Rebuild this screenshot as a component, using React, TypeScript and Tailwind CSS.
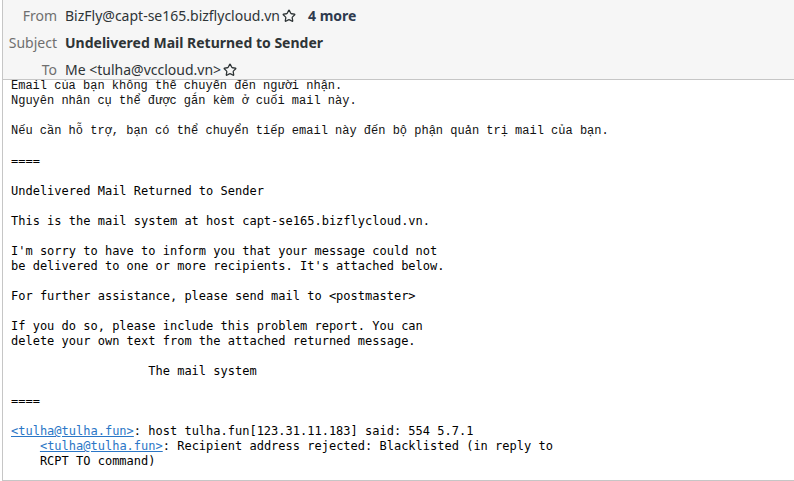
import { Star } from 'lucide-react'

const mono = { fontFamily: '"DejaVu Sans Mono", monospace' }
const viMono = { fontFamily: '"Liberation Mono", "DejaVu Sans Mono", monospace' }

const intro = `Email của bạn không thể chuyển đến người nhận.
Nguyên nhân cụ thể được gắn kèm ở cuối mail này.

Nếu cần hỗ trợ, bạn có thể chuyển tiếp email này đến bộ phận quản trị mail của bạn.`.normalize('NFC')

const report = `
====

Undelivered Mail Returned to Sender

This is the mail system at host capt-se165.bizflycloud.vn.

I'm sorry to have to inform you that your message could not
be delivered to one or more recipients. It's attached below.

For further assistance, please send mail to <postmaster>

If you do so, please include this problem report. You can
delete your own text from the attached returned message.

                   The mail system

====

`

function HeaderRow({ label, children }: { label: string; children: React.ReactNode }) {
  return (
    <div className="flex h-[27px] items-center">
      <div className="w-[54px] text-right text-[#6f6f6f]">{label}</div>
      <div className="ml-[8px] flex items-center text-[#2e3436]">{children}</div>
    </div>
  )
}

function StarIcon() {
  return <Star className="ml-[2px] h-[14px] w-[14px] text-[#2e3436]" strokeWidth={2.2} />
}

export default function App() {
  return (
    <div className="h-[481px] w-[794px] overflow-hidden bg-white pl-[2px]">
      <div className="flex h-full flex-col border-b border-l border-[#c6c6c6]">
        {/* message header */}
        <div
          className="h-[80px] shrink-0 border-b border-[#c6c6c6] bg-[#f6f6f6] pt-[2px] text-[14px]"
          style={{ fontFamily: '"Noto Sans", "Open Sans", sans-serif' }}
        >
          <HeaderRow label="From">
            <span>BizFly@capt-se165.bizflycloud.vn</span>
            <StarIcon />
            <span className="ml-[12px] font-bold text-[#2e3a4e]">4 more</span>
          </HeaderRow>
          <HeaderRow label="Subject">
            <span className="font-bold">Undelivered Mail Returned to Sender</span>
          </HeaderRow>
          <HeaderRow label="To">
            <span>Me &lt;tulha@vccloud.vn&gt;</span>
            <StarIcon />
          </HeaderRow>
        </div>

        {/* message body */}
        <div className="flex-1 overflow-hidden pl-[8px] text-[12px] leading-[15px] text-black">
          <div className="-mt-[1px] whitespace-pre font-medium text-[#111]" style={viMono}>
            {intro}
          </div>
          <pre style={mono}>
            {report}
            <a className="text-[#2a76c6] underline">&lt;tulha@tulha.fun&gt;</a>
            {`: host tulha.fun[123.31.11.183] said: 554 5.7.1\n    `}
            <a className="text-[#2a76c6] underline">&lt;tulha@tulha.fun&gt;</a>
            {`: Recipient address rejected: Blacklisted (in reply to\n    RCPT TO command)`}
          </pre>
        </div>
      </div>
    </div>
  )
}
